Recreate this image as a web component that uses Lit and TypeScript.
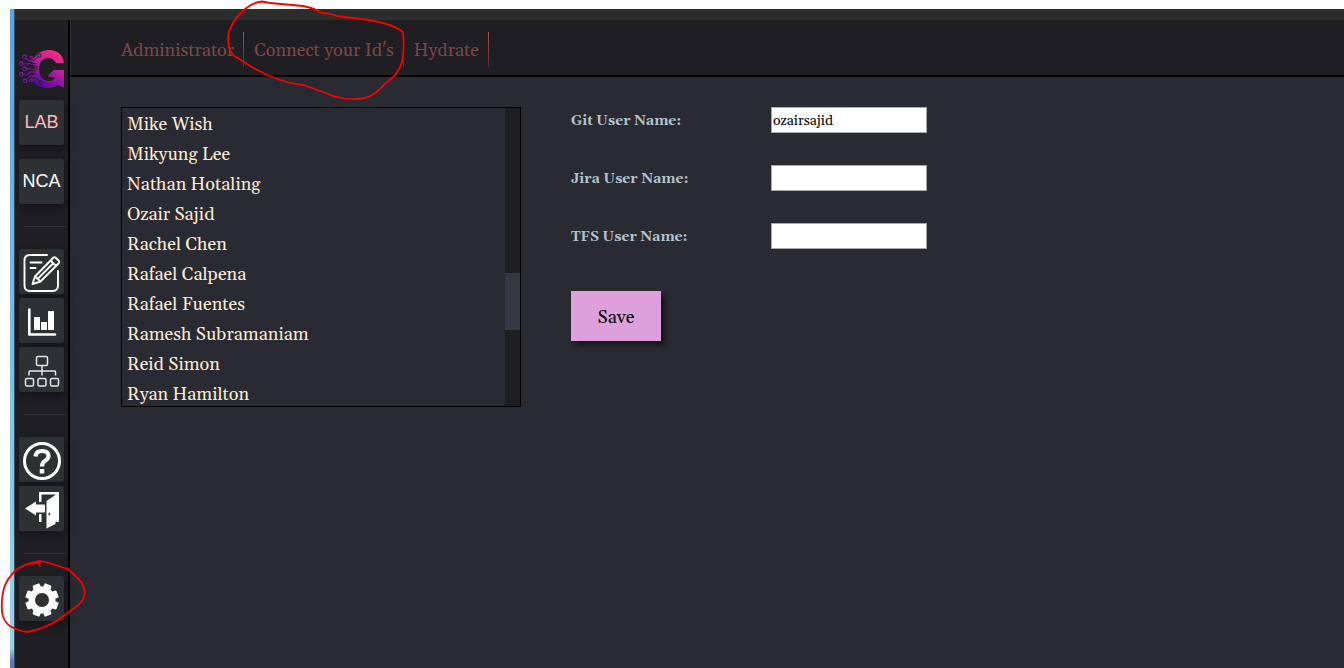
import { LitElement, html, svg, css } from "lit";
import { customElement, state } from "lit/decorators.js";

const people = [
  "Mike Wish",
  "Mikyung Lee",
  "Nathan Hotaling",
  "Ozair Sajid",
  "Rachel Chen",
  "Rafael Calpena",
  "Rafael Fuentes",
  "Ramesh Subramaniam",
  "Reid Simon",
  "Ryan Hamilton",
];

// Outline of an eight-toothed wheel, with a notch at each compass point.
function gearPath(cx: number, cy: number): string {
  const profile: [number, number][] = [
    [-17, 13.5],
    [-13, 17],
    [9, 17],
    [13, 16.2],
    [17, 13.5],
  ];
  const points: string[] = [];
  for (let tooth = 0; tooth < 8; tooth++) {
    const mirrored = tooth % 2 === 0 ? profile : profile.map(([a, r]) => [-a, r] as [number, number]).reverse();
    for (const [angle, radius] of mirrored) {
      const t = ((22.5 + tooth * 45 + angle) * Math.PI) / 180;
      points.push(`${(cx + radius * Math.sin(t)).toFixed(2)} ${(cy - radius * Math.cos(t)).toFixed(2)}`);
    }
  }
  return `M${points.join("L")}Z`;
}

const logo = svg`
  <svg class="logo" viewBox="0 0 45 38" role="img" aria-label="Home">
    <defs>
      <linearGradient id="g" x1="0.8" y1="0" x2="0.3" y2="1">
        <stop offset="0.1" stop-color="#f42a85" />
        <stop offset="0.5" stop-color="#b01f9a" />
        <stop offset="1" stop-color="#4f06a6" />
      </linearGradient>
      <linearGradient id="w" x1="1" y1="0" x2="0" y2="1">
        <stop offset="0" stop-color="#a01e8c" />
        <stop offset="1" stop-color="#4a0a9c" />
      </linearGradient>
    </defs>
    <path fill="url(#g)" d="M45 13H37Q34 8 29 8C23 8 20 13 20 19.500C20 26 24 31 30 31Q35 31 36 27H29.500V25L35 20H45V38L39 35Q35 38 29 38Q20 38 15 33L13 27L17 20L13 11Q19 0 29 0Q43 0 45 13Z" />
    <g fill="none" stroke="url(#w)" stroke-width="1.300">
      <circle cx="5.500" cy="7" r="1.800" /><circle cx="12" cy="7.700" r="1.400" />
      <circle cx="2.200" cy="13.800" r="1.800" /><circle cx="5.500" cy="19" r="1.800" />
      <circle cx="2.200" cy="24.500" r="1.800" /><circle cx="6" cy="31" r="1.800" />
      <circle cx="12" cy="30.300" r="1.400" />
      <path d="M7 8.500L10 11H15M4 13.800H16M7.300 19H17M4 24.500H9L11 22H18M7 29.500L11 26H17M13 9L16 8M13 29L16 28" />
    </g>
    <g fill="none" stroke="#1f1e23" stroke-width="1">
      <circle cx="20.500" cy="5.500" r="1.600" /><path d="M19 7L14 11" />
      <circle cx="16.500" cy="17.300" r="1.600" /><path d="M15 18L12 20M12 13.500H18" />
      <circle cx="21.500" cy="32.500" r="1.600" /><path d="M20 31L17 28H13M12 24H17" />
    </g>
  </svg>`;

const icons = {
  edit: svg`<svg class="icon" viewBox="0 0 45 45" aria-hidden="true" fill="none" stroke="#fff" stroke-width="1.900" stroke-linejoin="round" stroke-linecap="round">
    <path d="M28 6H11Q5.500 6 5.500 11.500V36.500Q5.500 42 11 42H33.500Q39 42 39 36.500V22" />
    <path d="M11.500 13.500H22.500M11.500 19H16.500" />
    <path d="M13.500 35L16 27.500L34 9Q35.500 7.500 37 9L39.500 11.500Q41 13 39.500 14.500L21.500 32.500ZM31.500 11.500L37 17M16 27.500L21.500 32.500M19 29.500L34 14.500" />
  </svg>`,
  chart: svg`<svg class="icon" viewBox="0 0 45 45" aria-hidden="true">
    <path fill="none" stroke="#fff" stroke-width="2.600" stroke-linecap="round" stroke-linejoin="round" d="M10.300 11.500V36.500H36" />
    <path fill="#fff" d="M15 19H21V32H15ZM22 24H28V32H22ZM29 13H35V32H29Z" />
  </svg>`,
  org: svg`<svg class="icon" viewBox="0 0 45 45" aria-hidden="true" fill="none" stroke="#e4e8e8" stroke-width="1.500">
    <rect x="17.500" y="9.500" width="11" height="9" rx="1.500" />
    <rect x="6.500" y="31.500" width="8" height="7.500" rx="1.500" />
    <rect x="19" y="31.500" width="8" height="7.500" rx="1.500" />
    <rect x="31.500" y="31.500" width="8" height="7.500" rx="1.500" />
    <path d="M23 19V28.500M10 28.500V25Q10 24 11 24H35.500Q36.500 24 36.500 25V28.500" />
  </svg>`,
  help: svg`<svg class="icon" viewBox="0 0 45 45" aria-hidden="true" fill="none" stroke="#fff">
    <circle cx="23" cy="24" r="17.500" stroke-width="3" />
    <path stroke-width="4.200" d="M16.500 19.500Q17 14 23 14Q29.500 14 29.500 19Q29.500 21.500 26.500 23.500Q23 25.500 23 29.500" />
    <path stroke-width="4.500" d="M23 32V36.500" />
  </svg>`,
  exit: svg`<svg class="icon" viewBox="0 0 45 45" aria-hidden="true">
    <path fill="#fff" fill-rule="evenodd" d="M20 6H40V36H36.500V38L27.500 42.500V15L37 8.500H22.500V16H20ZM29.500 27V29.500L31 29V26.500Z" />
    <path fill="#fff" d="M6 22.500L17 15.500V18.500H25Q26 18.500 26 19.500V25.500Q26 26.500 25 26.500H17V29.500ZM20 28H22.500V36H20Z" />
  </svg>`,
  gear: svg`<svg class="icon" viewBox="0 0 45 45" aria-hidden="true">
    <path fill="#fff" fill-rule="evenodd" d="${gearPath(23, 24)}M23 17A7 7 0 1 0 23 31A7 7 0 1 0 23 17Z" />
  </svg>`,
};

@customElement("side-nav")
class SideNav extends LitElement {
  static styles = css`
    :host { display: block; }
    .nav {
      display: flex;
      flex-direction: column;
      align-items: flex-start;
      padding: 30px 4px 0;
    }
    .logo { display: block; width: 45px; height: 38px; margin-bottom: 12px; }
    .group { display: flex; flex-direction: column; gap: 4px; }
    .wide { gap: 14px; }
    .tile {
      box-sizing: border-box;
      width: 45px;
      height: 45px;
      padding: 0;
      border: 0;
      border-radius: 2px;
      background: #2d3134;
      box-shadow: 2px 4px 8px rgba(0, 0, 0, 0.35);
      color: #fff;
      font: 18px/20px "Liberation Sans", Arial, sans-serif;
      text-align: center;
      white-space: nowrap;
      cursor: pointer;
    }
    .text { padding-bottom: 2px; }
    .pink { color: #ffb6c1; }
    .icon { display: block; width: 45px; height: 45px; }
    .rule {
      width: 41px;
      height: 1px;
      margin: 22px 0 22px 5px;
      border: 0;
      background: #343434;
    }
  `;

  render() {
    return html`
      <nav class="nav" aria-label="Main">
        ${logo}
        <div class="group wide">
          <button class="tile text pink">LAB</button>
          <button class="tile text">NCA</button>
        </div>
        <hr class="rule" />
        <div class="group">
          <button class="tile" aria-label="Edit">${icons.edit}</button>
          <button class="tile" aria-label="Charts">${icons.chart}</button>
          <button class="tile" aria-label="Organization">${icons.org}</button>
        </div>
        <hr class="rule" />
        <div class="group">
          <button class="tile" aria-label="Help">${icons.help}</button>
          <button class="tile" aria-label="Sign out">${icons.exit}</button>
        </div>
        <hr class="rule" />
        <button class="tile" aria-label="Settings">${icons.gear}</button>
      </nav>
    `;
  }
}

@customElement("app-root")
class AppRoot extends LitElement {
  @state() private gitName = "ozairsajid";

  static styles = css`
    :host {
      display: block;
      position: relative;
      box-sizing: border-box;
      min-height: 100vh;
      padding: 9px 0 0 10px;
      background: #fff;
      font-family: Gelasio, Georgia, "Liberation Serif", serif;
    }
    .window {
      display: grid;
      grid-template-columns: 5px 1fr;
      min-height: calc(100vh - 9px);
    }
    .edge {
      border-right: 1px solid #35506a;
      box-sizing: border-box;
      background: linear-gradient(#5aa3e6, #7fc4ea 60%, #9ad4e8 97%, #6079b0 99%);
    }
    .body { display: flex; flex-direction: column; background: #2a2a32; }
    .bar { height: 11px; background: #2d2d2d; }
    .columns { flex: 1; display: grid; grid-template-columns: 56px 1fr; }
    .side {
      background: #1f1e23;
      border-right: 2px solid #000;
      margin-right: 1px;
    }
    .tabs {
      box-sizing: border-box;
      display: flex;
      align-items: flex-start;
      height: 57px;
      padding: 12px 0 0 40px;
      background: #1f1e23;
      border-bottom: 2px solid #000;
    }
    .tab {
      box-sizing: border-box;
      height: 35px;
      padding: 2px 9px 0 10px;
      border-right: 1px solid;
      border-image: linear-gradient(#a54f4f, #5c2c2e) 1;
      color: #7a484a;
      font-size: 18px;
      line-height: 34px;
      text-decoration: none;
    }
    .content {
      display: flex;
      align-items: flex-start;
      gap: 50px;
      padding: 30px 50px;
    }
    .picker {
      box-sizing: border-box;
      width: 400px;
      height: 300px;
      display: flex;
      border: 1px solid #000;
      overflow: hidden;
    }
    .people { flex: 1; margin: 0; padding: 2px 5px 0; list-style: none; }
    .person {
      color: #faebd7;
      font-size: 18px;
      line-height: 30px;
      white-space: nowrap;
    }
    .track { width: 15px; padding-top: 165px; background: #1e1e22; }
    .thumb { height: 57px; background: #383845; }
    .form { display: flex; flex-direction: column; align-items: flex-start; }
    .fields {
      display: grid;
      grid-template-columns: 200px auto;
      align-items: center;
      row-gap: 32px;
      margin-bottom: 42px;
    }
    .label { padding-top: 2px; color: #b0c4ce; font-size: 14px; font-weight: bold; }
    .input {
      box-sizing: border-box;
      width: 156px;
      height: 26px;
      padding: 2px 1px 0;
      border: 1px solid #a9a9a9;
      background: #fff;
      color: #000;
      font-family: inherit;
      font-size: 14px;
      outline: none;
    }
    .save {
      width: 90px;
      height: 50px;
      padding: 2px 0 0;
      border: 0;
      background: #dda0dd;
      box-shadow: 4px 4px 5px rgba(0, 0, 0, 0.5);
      color: #000;
      font-family: inherit;
      font-size: 18px;
      cursor: pointer;
    }
    .marks {
      position: absolute;
      top: 0;
      left: 0;
      width: 420px;
      height: 640px;
      pointer-events: none;
    }
  `;

  render() {
    return html`
      <div class="window">
        <div class="edge"></div>
        <div class="body">
          <div class="bar"></div>
          <div class="columns">
            <side-nav class="side"></side-nav>
            <main>
              <nav class="tabs" aria-label="Settings sections">
                <a class="tab" href="#administrator">Administrator</a>
                <a class="tab" href="#connect">Connect your Id's</a>
                <a class="tab" href="#hydrate">Hydrate</a>
              </nav>
              <div class="content">
                <div class="picker">
                  <ul class="people">
                    ${people.map((name) => html`<li class="person">${name}</li>`)}
                  </ul>
                  <div class="track"><div class="thumb"></div></div>
                </div>
                <form class="form" @submit=${(e: Event) => e.preventDefault()}>
                  <div class="fields">
                    <label class="label" for="git">Git User Name:</label>
                    <input class="input" id="git" type="text" .value=${this.gitName} />
                    <label class="label" for="jira">Jira User Name:</label>
                    <input class="input" id="jira" type="text" />
                    <label class="label" for="tfs">TFS User Name:</label>
                    <input class="input" id="tfs" type="text" />
                  </div>
                  <button class="save" type="submit">Save</button>
                </form>
              </div>
            </main>
          </div>
        </div>
      </div>
      <svg class="marks" viewBox="0 0 420 640" aria-hidden="true" fill="none" stroke="#f60000" stroke-width="1.800" stroke-linejoin="round" stroke-linecap="round">
        <path d="M228 37C229 27 236 17 245 9C251 4 256 2 262 1.500L270 3L303 6Q314 8 322 13L331 14L337 16L360 19Q390 22 403 32C404 43 404 53 402 62C399 73 392 78 385 84C378 91 373 96 365 98Q350 101 333 96Q316 89 303 85Q291 84 280 80Q261 73 247 64L233 55Q228 49 228 37Z" />
        <path d="M40 566Q39 561 32 564M32 564Q39 560 46 562Q58 566 68 569Q77 577 82 583Q86 591 84 597Q82 603 73 609L58 620Q44 629 27 632Q18 631 10 626Q3 621 2 612Q1 599 4 588Q7 579 15 571Q23 564 40 561" />
      </svg>
    `;
  }
}
